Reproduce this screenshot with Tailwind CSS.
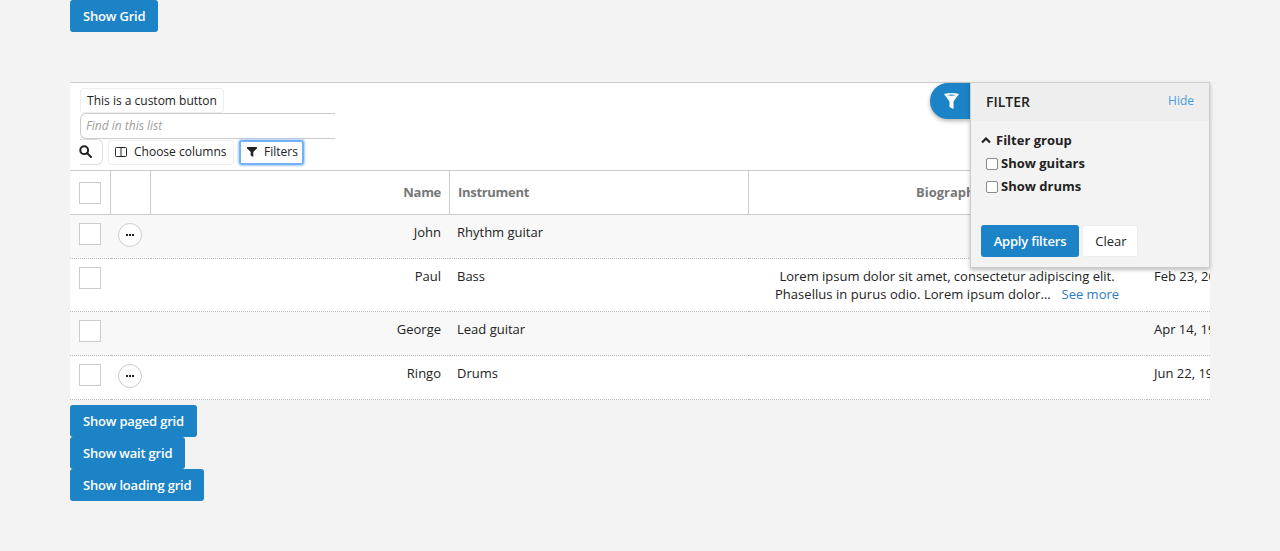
<!DOCTYPE html>
<html><head><meta charset="utf-8"><script src="https://cdn.jsdelivr.net/npm/@tailwindcss/browser@4"></script></head>
<body class="bg-[#f3f3f3] font-['Open_Sans',sans-serif] text-[13px] text-[#222] h-[551px] overflow-hidden">
<div class="px-[70px]">
  <button class="block h-8 pt-px px-[13px] bg-[#1c83c6] text-white font-semibold rounded-[3px] text-[13px] tracking-[-0.18px]">Show Grid</button>
  <div class="relative mt-[50px] bg-white border-t border-[#ccc] h-[318px]">
    <div class="h-[88px] pl-[10px] pt-[5px] border-b border-[#ccc] w-full">
      <div class="h-[25px] w-[144px] flex items-center justify-center border border-[#eee] rounded-[3px] text-[12px] text-[#222]">This is a custom button</div>
      <div class="h-[26px] w-[255px] flex items-center pl-[5px] border border-r-0 border-[#ccc] rounded-l-[6px] text-[12px] font-medium italic text-[#a0a0a0]">Find in this list</div>
      <div class="flex items-center h-[26px]">
        <div class="w-[23px] h-[26px] flex items-center border border-l-0 border-[#ddd] rounded-r-[6px]">
          <svg class="w-[13px] h-[13px] -ml-px -mt-[2px]" viewBox="0 0 13 13" fill="none" stroke="#222" stroke-width="2"><circle cx="5.2" cy="5.2" r="3.9"/><path d="M8 8l4 4" stroke-linecap="round"/></svg>
        </div>
        <div class="ml-[5px] w-[126px] h-[25px] flex items-center pl-[6px] border border-[#eee] rounded-[3px] text-[12px]">
          <svg class="w-[12px] h-[12px] mr-[7px]" viewBox="0 0 12 12" fill="none" stroke="#222"><rect x=".5" y="1.500" width="11" height="9" rx="1"/><path d="M6 1.500v9"/></svg><span>Choose columns</span>
        </div>
        <div class="ml-[5px] w-[65px] h-[25px] flex items-center pl-[6px] border-2 border-[#74b2f5] rounded-[3px] text-[12px] shadow-[0_0_2px_1px_#a6cdf8]">
          <svg class="w-[10px] h-[10px] mr-[7px] shrink-0" viewBox="0 0 10 10" fill="#222"><path d="M0 0h10v1.200L6.300 5v5L3.700 8.500V5L0 1.200z"/></svg>Filters
        </div>
      </div>
    </div>
    <div class="grid grid-cols-[41px_40px_299px_299px_398px_63px] overflow-hidden">
      <div class="h-[44px] border-b border-r border-[#ccc] flex items-center pl-[9px]"><span class="block w-[22px] h-[22px] border border-[#ccc] bg-white"></span></div>
      <div class="h-[44px] border-b border-r border-[#ccc]"></div>
      <div class="h-[44px] border-b border-r border-[#ccc] flex items-center justify-end pr-[8px] font-bold text-[#777] tracking-[-0.3px]">Name</div>
      <div class="h-[44px] border-b border-r border-[#ccc] flex items-center pl-[8px] font-bold text-[#777] tracking-[-0.3px]">Instrument</div>
      <div class="h-[44px] border-b border-[#ccc] flex items-center justify-center font-bold text-[#777] pl-[2px]">Biography</div>
      <div class="h-[44px] border-b border-[#ccc]"></div>

      <div class="h-[44px] bg-[#f8f8f8] border-b border-dotted border-[#bbb] pl-[9px] pt-[8px]"><span class="block w-[22px] h-[22px] border border-[#ccc] bg-white"></span></div>
      <div class="h-[44px] bg-[#f8f8f8] border-b border-dotted border-[#bbb] pl-[7px] pt-[8px]"><span class="flex items-center justify-center w-6 h-6 border border-[#ccc] rounded-full bg-white gap-px"><i class="w-[2px] h-[2px] bg-[#222]"></i><i class="w-[2px] h-[2px] bg-[#222]"></i><i class="w-[2px] h-[2px] bg-[#222]"></i></span></div>
      <div class="h-[44px] bg-[#f8f8f8] border-b border-dotted border-[#bbb] text-right pr-[9px] pt-[8px] leading-[18px]">John</div>
      <div class="h-[44px] bg-[#f8f8f8] border-b border-dotted border-[#bbb] pl-[7px] pt-[8px] leading-[18px]">Rhythm guitar</div>
      <div class="h-[44px] bg-[#f8f8f8] border-b border-dotted border-[#bbb]"></div>
      <div class="h-[44px] bg-[#f8f8f8] border-b border-dotted border-[#bbb]"></div>

      <div class="h-[53px] border-b border-dotted border-[#bbb] pl-[9px] pt-[8px]"><span class="block w-[22px] h-[22px] border border-[#ccc] bg-white"></span></div>
      <div class="h-[53px] border-b border-dotted border-[#bbb]"></div>
      <div class="h-[53px] border-b border-dotted border-[#bbb] text-right pr-[9px] pt-[8px] leading-[18px]">Paul</div>
      <div class="h-[53px] border-b border-dotted border-[#bbb] pl-[7px] pt-[8px] leading-[18px]">Bass</div>
      <div class="h-[53px] border-b border-dotted border-[#bbb] pt-[8px] leading-[18px] text-center pl-[5px] pr-[7px]"><p class="whitespace-nowrap">Lorem ipsum dolor sit amet, consectetur adipiscing elit.</p><p class="whitespace-nowrap"><span class="tracking-[0.05px]">Phasellus in purus odio. Lorem ipsum dolor</span><span class="tracking-[3px]">…</span><a class="ml-[8px] text-[#2b7bc0]">See more</a></p></div>
      <div class="h-[53px] border-b border-dotted border-[#bbb] pl-[7px] pt-[8px] leading-[18px] whitespace-nowrap overflow-hidden">Feb 23, 2000</div>

      <div class="h-[44px] bg-[#f8f8f8] border-b border-dotted border-[#bbb] pl-[9px] pt-[8px]"><span class="block w-[22px] h-[22px] border border-[#ccc] bg-white"></span></div>
      <div class="h-[44px] bg-[#f8f8f8] border-b border-dotted border-[#bbb]"></div>
      <div class="h-[44px] bg-[#f8f8f8] border-b border-dotted border-[#bbb] text-right pr-[9px] pt-[8px] leading-[18px]">George</div>
      <div class="h-[44px] bg-[#f8f8f8] border-b border-dotted border-[#bbb] pl-[7px] pt-[8px] leading-[18px]">Lead guitar</div>
      <div class="h-[44px] bg-[#f8f8f8] border-b border-dotted border-[#bbb]"></div>
      <div class="h-[44px] bg-[#f8f8f8] border-b border-dotted border-[#bbb] pl-[7px] pt-[8px] leading-[18px] whitespace-nowrap overflow-hidden">Apr 14, 1990</div>

      <div class="h-[44px] border-b border-dotted border-[#bbb] pl-[9px] pt-[8px]"><span class="block w-[22px] h-[22px] border border-[#ccc] bg-white"></span></div>
      <div class="h-[44px] border-b border-dotted border-[#bbb] pl-[7px] pt-[8px]"><span class="flex items-center justify-center w-6 h-6 border border-[#ccc] rounded-full bg-white gap-px"><i class="w-[2px] h-[2px] bg-[#222]"></i><i class="w-[2px] h-[2px] bg-[#222]"></i><i class="w-[2px] h-[2px] bg-[#222]"></i></span></div>
      <div class="h-[44px] border-b border-dotted border-[#bbb] text-right pr-[9px] pt-[8px] leading-[18px]">Ringo</div>
      <div class="h-[44px] border-b border-dotted border-[#bbb] pl-[7px] pt-[8px] leading-[18px]">Drums</div>
      <div class="h-[44px] border-b border-dotted border-[#bbb]"></div>
      <div class="h-[44px] border-b border-dotted border-[#bbb] pl-[7px] pt-[8px] leading-[18px] whitespace-nowrap overflow-hidden">Jun 22, 1990</div>
    </div>

    <div class="absolute left-[860px] top-0 w-[40px] h-[36px] bg-[#1c83c6] rounded-l-[18px] shadow-[0_2px_4px_rgba(0,0,0,.3)] flex items-center justify-center pl-[2px]">
      <svg class="w-[15px] h-[16px]" viewBox="0 0 15 16"><path fill-rule="evenodd" fill="#fff" d="M0 1Q7.500-1 15 1L9.500 8.500V16L5.500 14V8.500zM3 2Q7.500 3.400 12 2Q7.500 1 3 2z"/></svg>
    </div>
    <div class="absolute left-[900px] top-[-1px] w-[240px] h-[186px] bg-[#f3f3f3] border border-[#ccc] shadow-[0_2px_4px_rgba(0,0,0,.25)]">
      <div class="h-[38px] pb-[2px] bg-[#eee] flex items-center justify-between pl-[15px] pr-[15px]"><span class="text-[14px] font-semibold text-[#222]">FILTER</span><span class="text-[12px] text-[#4a9ae0]">Hide</span></div>
      <div class="pl-[10px] pt-[8px]">
        <div class="flex items-center h-[23px] font-bold"><svg class="w-[10px] h-[7px] mr-[5px]" viewBox="0 0 10 7" fill="none" stroke="#222" stroke-width="2.200"><path d="M1 5.500l4-4 4 4"/></svg>Filter group</div>
        <div class="flex items-center h-[23px] font-bold pl-[5px]"><span class="block w-[12px] h-[12px] border border-[#888] rounded-[2px] bg-white mr-[3px]"></span>Show guitars</div>
        <div class="flex items-center h-[23px] font-bold pl-[5px]"><span class="block w-[12px] h-[12px] border border-[#888] rounded-[2px] bg-white mr-[3px]"></span>Show drums</div>
      </div>
      <div class="flex pl-[10px] pt-[27px] gap-[3px]">
        <button class="h-[32px] pt-px w-[98px] bg-[#1c83c6] text-white font-semibold rounded-[3px] text-[13px] tracking-[-0.2px]">Apply filters</button>
        <button class="h-[32px] w-[56px] pt-px pl-[2px] bg-white border border-[#eee] rounded-[3px] text-[13px] text-[#222]">Clear</button>
      </div>
    </div>
  </div>
  <div class="pt-[5px] flex flex-col items-start">
    <button class="h-8 pt-px px-[13px] bg-[#1c83c6] text-white font-semibold rounded-[3px] text-[13px] tracking-[-0.18px]">Show paged grid</button>
    <button class="h-8 pt-px px-[13px] bg-[#1c83c6] text-white font-semibold rounded-[3px] text-[13px] tracking-[-0.2px]">Show wait grid</button>
    <button class="h-8 pt-px px-[13px] bg-[#1c83c6] text-white font-semibold rounded-[3px] text-[13px] tracking-[-0.18px]">Show loading grid</button>
  </div>
</div>
</body></html>
